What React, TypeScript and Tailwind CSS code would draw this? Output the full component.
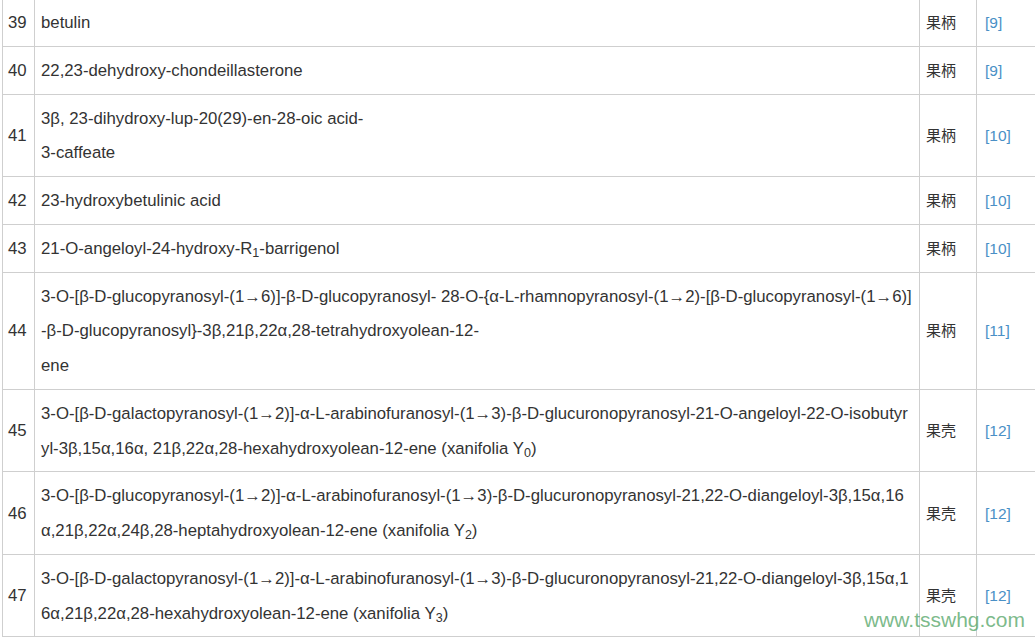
import type { ReactNode } from 'react'

type Row = {
  no: number
  lines: ReactNode[]
  part: string
  refNo: number
}

const Y = ({ n }: { n: string }) => (
  <>
    Y<sub>{n}</sub>
  </>
)

const rows: Row[] = [
  { no: 39, lines: ['betulin'], part: '果柄', refNo: 9 },
  { no: 40, lines: ['22,23-dehydroxy-chondeillasterone'], part: '果柄', refNo: 9 },
  {
    no: 41,
    lines: ['3β, 23-dihydroxy-lup-20(29)-en-28-oic acid-', '3-caffeate'],
    part: '果柄',
    refNo: 10,
  },
  { no: 42, lines: ['23-hydroxybetulinic acid'], part: '果柄', refNo: 10 },
  {
    no: 43,
    lines: [
      <>
        21-O-angeloyl-24-hydroxy-R<sub>1</sub>-barrigenol
      </>,
    ],
    part: '果柄',
    refNo: 10,
  },
  {
    no: 44,
    lines: [
      '3-O-[β-D-glucopyranosyl-(1→6)]-β-D-glucopyranosyl- 28-O-{α-L-rhamnopyranosyl-(1→2)-[β-D-glucopyranosyl-(1→6)]',
      '-β-D-glucopyranosyl}-3β,21β,22α,28-tetrahydroxyolean-12-',
      'ene',
    ],
    part: '果柄',
    refNo: 11,
  },
  {
    no: 45,
    lines: [
      '3-O-[β-D-galactopyranosyl-(1→2)]-α-L-arabinofuranosyl-(1→3)-β-D-glucuronopyranosyl-21-O-angeloyl-22-O-isobutyr',
      <>
        yl-3β,15α,16α, 21β,22α,28-hexahydroxyolean-12-ene (xanifolia <Y n="0" />)
      </>,
    ],
    part: '果壳',
    refNo: 12,
  },
  {
    no: 46,
    lines: [
      '3-O-[β-D-glucopyranosyl-(1→2)]-α-L-arabinofuranosyl-(1→3)-β-D-glucuronopyranosyl-21,22-O-diangeloyl-3β,15α,16',
      <>
        α,21β,22α,24β,28-heptahydroxyolean-12-ene (xanifolia <Y n="2" />)
      </>,
    ],
    part: '果壳',
    refNo: 12,
  },
  {
    no: 47,
    lines: [
      '3-O-[β-D-galactopyranosyl-(1→2)]-α-L-arabinofuranosyl-(1→3)-β-D-glucuronopyranosyl-21,22-O-diangeloyl-3β,15α,1',
      <>
        6α,21β,22α,28-hexahydroxyolean-12-ene (xanifolia <Y n="3" />)
      </>,
    ],
    part: '果壳',
    refNo: 12,
  },
]

// cells: slightly more room on top so the text sits like the original
const cell = 'border border-[#cfcfcf] pt-[7px] pb-[5px] align-middle leading-[34.75px]'

export default function App() {
  return (
    <div
      className="relative h-[638px] w-[1035px] overflow-hidden bg-white text-[16.75px] text-[#333]"
      style={{ fontFamily: '"Liberation Sans", Arial, "Noto Sans CJK SC", sans-serif' }}
    >
      <table className="ml-[2px] -mt-[2px] w-[1045px] table-fixed border-collapse">
        <colgroup>
          <col className="w-[32px]" />
          <col className="w-[885px]" />
          <col className="w-[57px]" />
          <col />
        </colgroup>
        <tbody>
          {rows.map((r) => (
            <tr key={r.no}>
              <td className={`${cell} px-[5px]`}>{r.no}</td>
              <td className={`${cell} px-[6px]`}>
                {r.lines.map((l, i) => (
                  <div key={i} className="whitespace-nowrap">
                    {l}
                  </div>
                ))}
              </td>
              <td className={`${cell} px-[6px] text-[15px]`}>{r.part}</td>
              <td className={`${cell} px-[8px] text-[15.5px]`}>
                <a className="text-[#4a90c6]">[{r.refNo}]</a>
              </td>
            </tr>
          ))}
        </tbody>
      </table>

      {/* site watermark */}
      <div className="pointer-events-none absolute right-[10px] top-[609px] text-[21px] leading-none text-[#5aa86c]/80">
        www.tsswhg.com
      </div>
    </div>
  )
}
